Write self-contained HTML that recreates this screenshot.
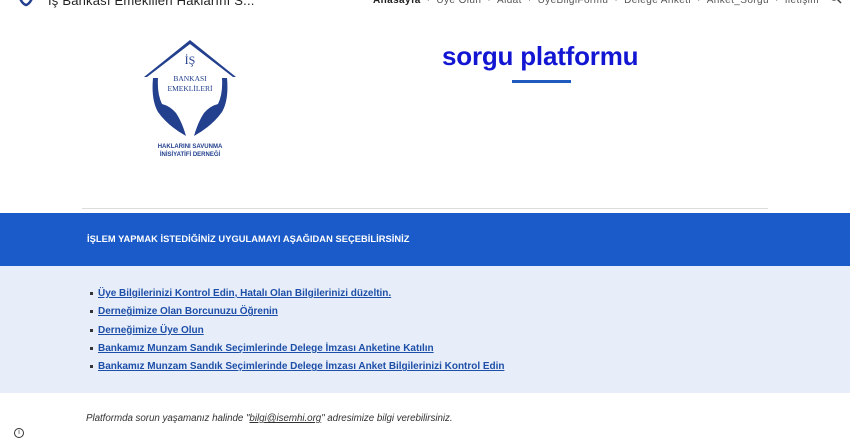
<!DOCTYPE html>
<html><head><meta charset="utf-8">
<style>
*{margin:0;padding:0;box-sizing:border-box}
body{width:850px;height:439px;overflow:hidden;background:#fff;font-family:"Liberation Sans","DejaVu Sans",sans-serif;position:relative}
.title{position:absolute;left:48px;top:-7px;font-size:13px;color:#222;letter-spacing:.2px;white-space:nowrap}
.nav{position:absolute;top:-5px;left:373px;font-size:10px;color:#555;white-space:nowrap;letter-spacing:.4px}
.nav b{color:#222}
.nav span{margin:0 6px;color:#999}
.h1{position:absolute;left:442px;top:41px;font-size:26px;color:#1216d2;font-weight:bold;letter-spacing:-.2px}
.ul{position:absolute;left:512px;top:80px;width:59px;height:3px;background:#1f5bbf}
.hr{position:absolute;left:82px;top:208px;width:686px;height:1px;background:#ddd}
.band{position:absolute;left:0;top:213px;width:850px;height:53px;background:#1a5bc9}
.band p{position:absolute;left:87px;top:21px;color:#fff;font-size:9.3px;font-weight:bold;letter-spacing:.05px}
.light{position:absolute;left:0;top:266px;width:850px;height:127px;background:#e8eef9}
ul{position:absolute;left:98px;top:288px;list-style:none}
li{font-size:10px;font-weight:bold;color:#1d4fa8;text-decoration:underline;height:18.3px;position:relative;letter-spacing:-.02px}
li:before{content:"";position:absolute;left:-8px;top:4px;width:3px;height:3px;background:#333}
.foot{position:absolute;left:86px;top:413px;font-size:9.8px;font-style:italic;color:#333;letter-spacing:-.05px}
.foot u{color:#333}
.info{position:absolute;left:14px;top:428px;width:10px;height:10px;border:1px solid #333;border-radius:50%;font-size:7px;text-align:center;line-height:8px;color:#333}
</style></head><body>
<svg style="position:absolute;left:16px;top:-6px" width="20" height="14" viewBox="0 0 20 14"><path d="M3 2 Q6 10 10 11 Q14 10 17 2" stroke="#23408e" stroke-width="2.5" fill="none"/></svg>
<div class="title">İş Bankası Emeklileri Haklarını S...</div>
<div class="nav"><b>Anasayfa</b><span>·</span>Üye Olun<span>·</span>Aidat<span>·</span>ÜyeBilgiFormu<span>·</span>Delege Anketi<span>·</span>Anket_Sorgu<span>·</span>İletişim</div>
<svg style="position:absolute;left:829px;top:-6px" width="14" height="12" viewBox="0 0 14 12"><circle cx="5" cy="2" r="4" stroke="#444" stroke-width="1.4" fill="none"/><path d="M8 5 L12 9" stroke="#444" stroke-width="1.5"/></svg>

<svg style="position:absolute;left:140px;top:38px" width="100" height="125" viewBox="0 0 100 125">
<polygon points="50,2 4,39 7,39 50,6 93,39 96,39" fill="#23408e"/>
<text x="50" y="26" font-family="Liberation Serif,serif" font-size="12" fill="#23408e" text-anchor="middle">İŞ</text>
<text x="50" y="43" font-family="Liberation Serif,serif" font-size="7.5" fill="#23408e" text-anchor="middle">BANKASI</text>
<text x="50" y="53" font-family="Liberation Serif,serif" font-size="7.5" fill="#23408e" text-anchor="middle">EMEKLİLERİ</text>
<path d="M13 40 Q11 62 18 74 Q28 88 46 98 Q42 84 36 75 Q30 68 22 66 Q17 56 18 40 Z" fill="#23408e"/>
<path d="M87 40 Q89 62 82 74 Q72 88 54 98 Q58 84 64 75 Q70 68 78 66 Q83 56 82 40 Z" fill="#23408e"/>
<text x="50" y="110" font-size="6" font-weight="bold" fill="#23408e" text-anchor="middle">HAKLARINI SAVUNMA</text>
<text x="50" y="118" font-size="6" font-weight="bold" fill="#23408e" text-anchor="middle">İNİSİYATİFİ DERNEĞİ</text>
</svg>

<div class="h1">sorgu platformu</div>
<div class="ul"></div>
<div class="hr"></div>
<div class="band"><p>İŞLEM YAPMAK İSTEDİĞİNİZ UYGULAMAYI AŞAĞIDAN SEÇEBİLİRSİNİZ</p></div>
<div class="light"></div>
<ul>
<li>Üye Bilgilerinizi Kontrol Edin, Hatalı Olan Bilgilerinizi düzeltin. </li>
<li>Derneğimize Olan Borcunuzu Öğrenin</li>
<li>Derneğimize Üye Olun</li>
<li>Bankamız Munzam Sandık Seçimlerinde Delege İmzası Anketine Katılın</li>
<li>Bankamız Munzam Sandık Seçimlerinde Delege İmzası Anket Bilgilerinizi Kontrol Edin</li>
</ul>
<div class="foot">Platformda sorun yaşamanız halinde "<u>bilgi@isemhi.org</u>" adresimize bilgi verebilirsiniz.</div>
<div class="info">i</div>
</body></html>
